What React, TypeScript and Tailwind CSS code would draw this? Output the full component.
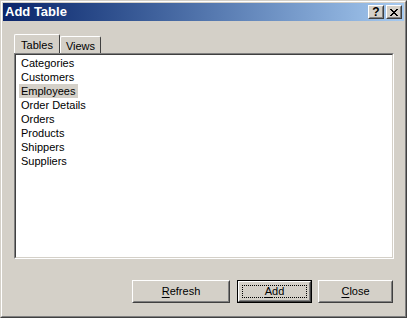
import type { ReactNode } from "react";

const tables = [
  "Categories",
  "Customers",
  "Employees",
  "Order Details",
  "Orders",
  "Products",
  "Shippers",
  "Suppliers",
];

function CaptionButton({ children }: { children: ReactNode }) {
  return (
    <div className="h-[14px] w-[16px] border border-white border-r-[#404040] border-b-[#404040] bg-[#d4d0c8]">
      <div className="flex h-full w-full items-center justify-center border border-[#d4d0c8] border-r-[#808080] border-b-[#808080]">
        {children}
      </div>
    </div>
  );
}

function Button({
  width,
  label,
  rest,
  isDefault,
}: {
  width: string;
  label: string;
  rest: string;
  isDefault?: boolean;
}) {
  const body = (
    <div className="h-full w-full border border-white border-r-[#404040] border-b-[#404040] bg-[#d4d0c8]">
      <div className="flex h-full w-full items-center justify-center border border-[#d4d0c8] border-r-[#808080] border-b-[#808080] p-[2px]">
        <div
          className={
            "flex h-full w-full items-center justify-center " +
            (isDefault ? "border border-dotted border-black" : "border border-transparent")
          }
        >
          <span>
            <span className="underline underline-offset-[2px]">{label}</span>
            {rest}
          </span>
        </div>
      </div>
    </div>
  );
  return (
    <div className={width + " h-[23px] " + (isDefault ? "border border-black" : "")}>
      {body}
    </div>
  );
}

export default function App() {
  return (
    <div
      className="h-[318px] w-[407px] border border-[#d4d0c8] border-r-[#404040] border-b-[#404040] text-[11px] text-black"
      style={{ fontFamily: '"Liberation Sans", Arial, sans-serif' }}
    >
      <div className="flex h-full w-full flex-col border border-white border-r-[#808080] border-b-[#808080] bg-[#d4d0c8] p-px">
        {/* title bar */}
        <div className="flex h-[18px] items-center bg-gradient-to-r from-[#0a246a] to-[#a6caf0] pr-[2px] pl-[2px]">
          <span className="flex-1 text-[13px] font-bold text-white">Add Table</span>
          <CaptionButton>
            <span className="text-[12px] leading-none font-bold">?</span>
          </CaptionButton>
          <div className="ml-[2px]">
            <CaptionButton>
              <svg width="8" height="7" viewBox="0 0 8 7" shapeRendering="crispEdges">
                <path
                  d="M0 0h2v1H0zM6 0h2v1H6zM1 1h2v1H1zM5 1h2v1H5zM2 2h4v1H2zM3 3h2v1H3zM2 4h4v1H2zM1 5h2v1H1zM5 5h2v1H5zM0 6h2v1H0zM6 6h2v1H6z"
                  fill="#000"
                />
              </svg>
            </CaptionButton>
          </div>
        </div>

        {/* tabs */}
        <div className="mt-[13px] ml-[11px] flex h-[19px] items-end">
          <div className="relative z-10 flex h-[19px] w-[46px] items-start justify-center rounded-t-[2px] border border-b-0 border-white border-r-[#404040] pt-[2px]">
            Tables
          </div>
          <div className="flex h-[17px] w-[41px] items-start justify-center rounded-t-[2px] border border-b-0 border-white border-r-[#404040] pt-[1px]">
            Views
          </div>
        </div>

        {/* list */}
        <div className="ml-[11px] h-[206px] w-[380px] border border-[#808080] border-r-white border-b-white">
          <div className="h-full w-full border border-[#404040] border-r-[#d4d0c8] border-b-[#d4d0c8] bg-white pt-px pl-[3px]">
            {tables.map((t) => (
              <div key={t} className="flex h-[14px] items-center">
                <span className={"px-[2px] leading-[14px] " + (t === "Employees" ? "w-[59px] bg-[#d4d0c8]" : "")}>
                  {t}
                </span>
              </div>
            ))}
          </div>
        </div>

        {/* buttons */}
        <div className="mt-[21px] flex justify-end pr-[11px]">
          <Button width="w-[98px]" label="R" rest="efresh" />
          <div className="ml-[7px]">
            <Button width="w-[75px]" label="A" rest="dd" isDefault />
          </div>
          <div className="ml-[6px]">
            <Button width="w-[75px]" label="C" rest="lose" />
          </div>
        </div>
      </div>
    </div>
  );
}
